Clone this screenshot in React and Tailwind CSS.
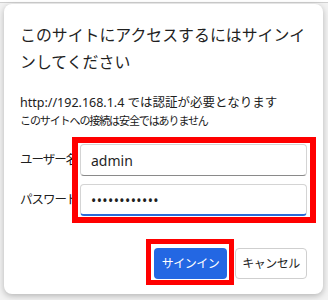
import React from 'react'

const font = { fontFamily: '"Noto Sans", "Noto Sans CJK JP", sans-serif' }

export default function App() {
  return (
    <div className="w-[328px] h-[300px] bg-white pt-[2px] overflow-hidden" style={font}>
      <div className="h-full border-t border-[#cfcfcf] bg-[#f2f2f2] pt-px">
        <div className="ml-1 w-[319px] rounded-lg bg-white shadow-[0_2px_6px_rgba(0,0,0,0.25)] px-4 pt-[18px] pb-[15px]">
          {/* Title */}
          <h1 className="text-[15.9px] leading-[27px] text-[#1f1f1f]">
            このサイトにアクセスするにはサインインしてください
          </h1>

          {/* Message */}
          <div className="mt-[18px] text-[#202020]">
            <p className="text-[12.5px] leading-[18px] whitespace-nowrap">http://192.168.1.4 では認証が必要となります</p>
            <p className="text-[11px] tracking-[-1.1px] leading-[18px] whitespace-nowrap">このサイトへの接続は安全ではありません</p>
          </div>

          {/* Form */}
          <div className="mt-[14px] flex gap-[2px]">
            <div className="w-[58px] flex flex-col gap-2 text-[12.5px] tracking-[-1px] text-[#202020]">
              <div className="h-8 flex items-center whitespace-nowrap">ユーザー名</div>
              <div className="h-8 flex items-center whitespace-nowrap">パスワード</div>
            </div>
            <div className="relative flex-1 flex flex-col gap-2">
              <div className="h-8 rounded border border-[#d4d4d4] border-b-[#8a8a8a] bg-white pl-[10px] flex items-center text-[14px] text-[#1f1f1f]">
                admin
              </div>
              <div className="h-8 rounded border border-[#d4d4d4] border-b-2 border-b-[#2a6ad8] bg-white pl-[10px] pt-[1px] flex items-center text-[14px] tracking-[0.4px] text-[#1f1f1f]">
                ••••••••••••
              </div>
              {/* annotation */}
              <div className="absolute -left-2 -right-[9px] -top-[7px] -bottom-[7px] border-[6px] border-[#ff0000] pointer-events-none" />
            </div>
          </div>

          {/* Buttons */}
          <div className="mt-8 flex justify-end gap-2">
            <div className="relative">
              <button className="w-[73px] h-[31px] rounded bg-[#2367e3] text-white text-[12px] tracking-[-0.5px]">
                サインイン
              </button>
              <div className="absolute -left-2 -right-[7px] -top-[9px] -bottom-[6px] border-[5px] border-[#ff0000] pointer-events-none" />
            </div>
            <button className="w-[72px] h-[31px] rounded border border-[#cfcfcf] bg-white text-[#1f1f1f] text-[12px] tracking-[-0.5px]">
              キャンセル
            </button>
          </div>
        </div>
      </div>
    </div>
  )
}
